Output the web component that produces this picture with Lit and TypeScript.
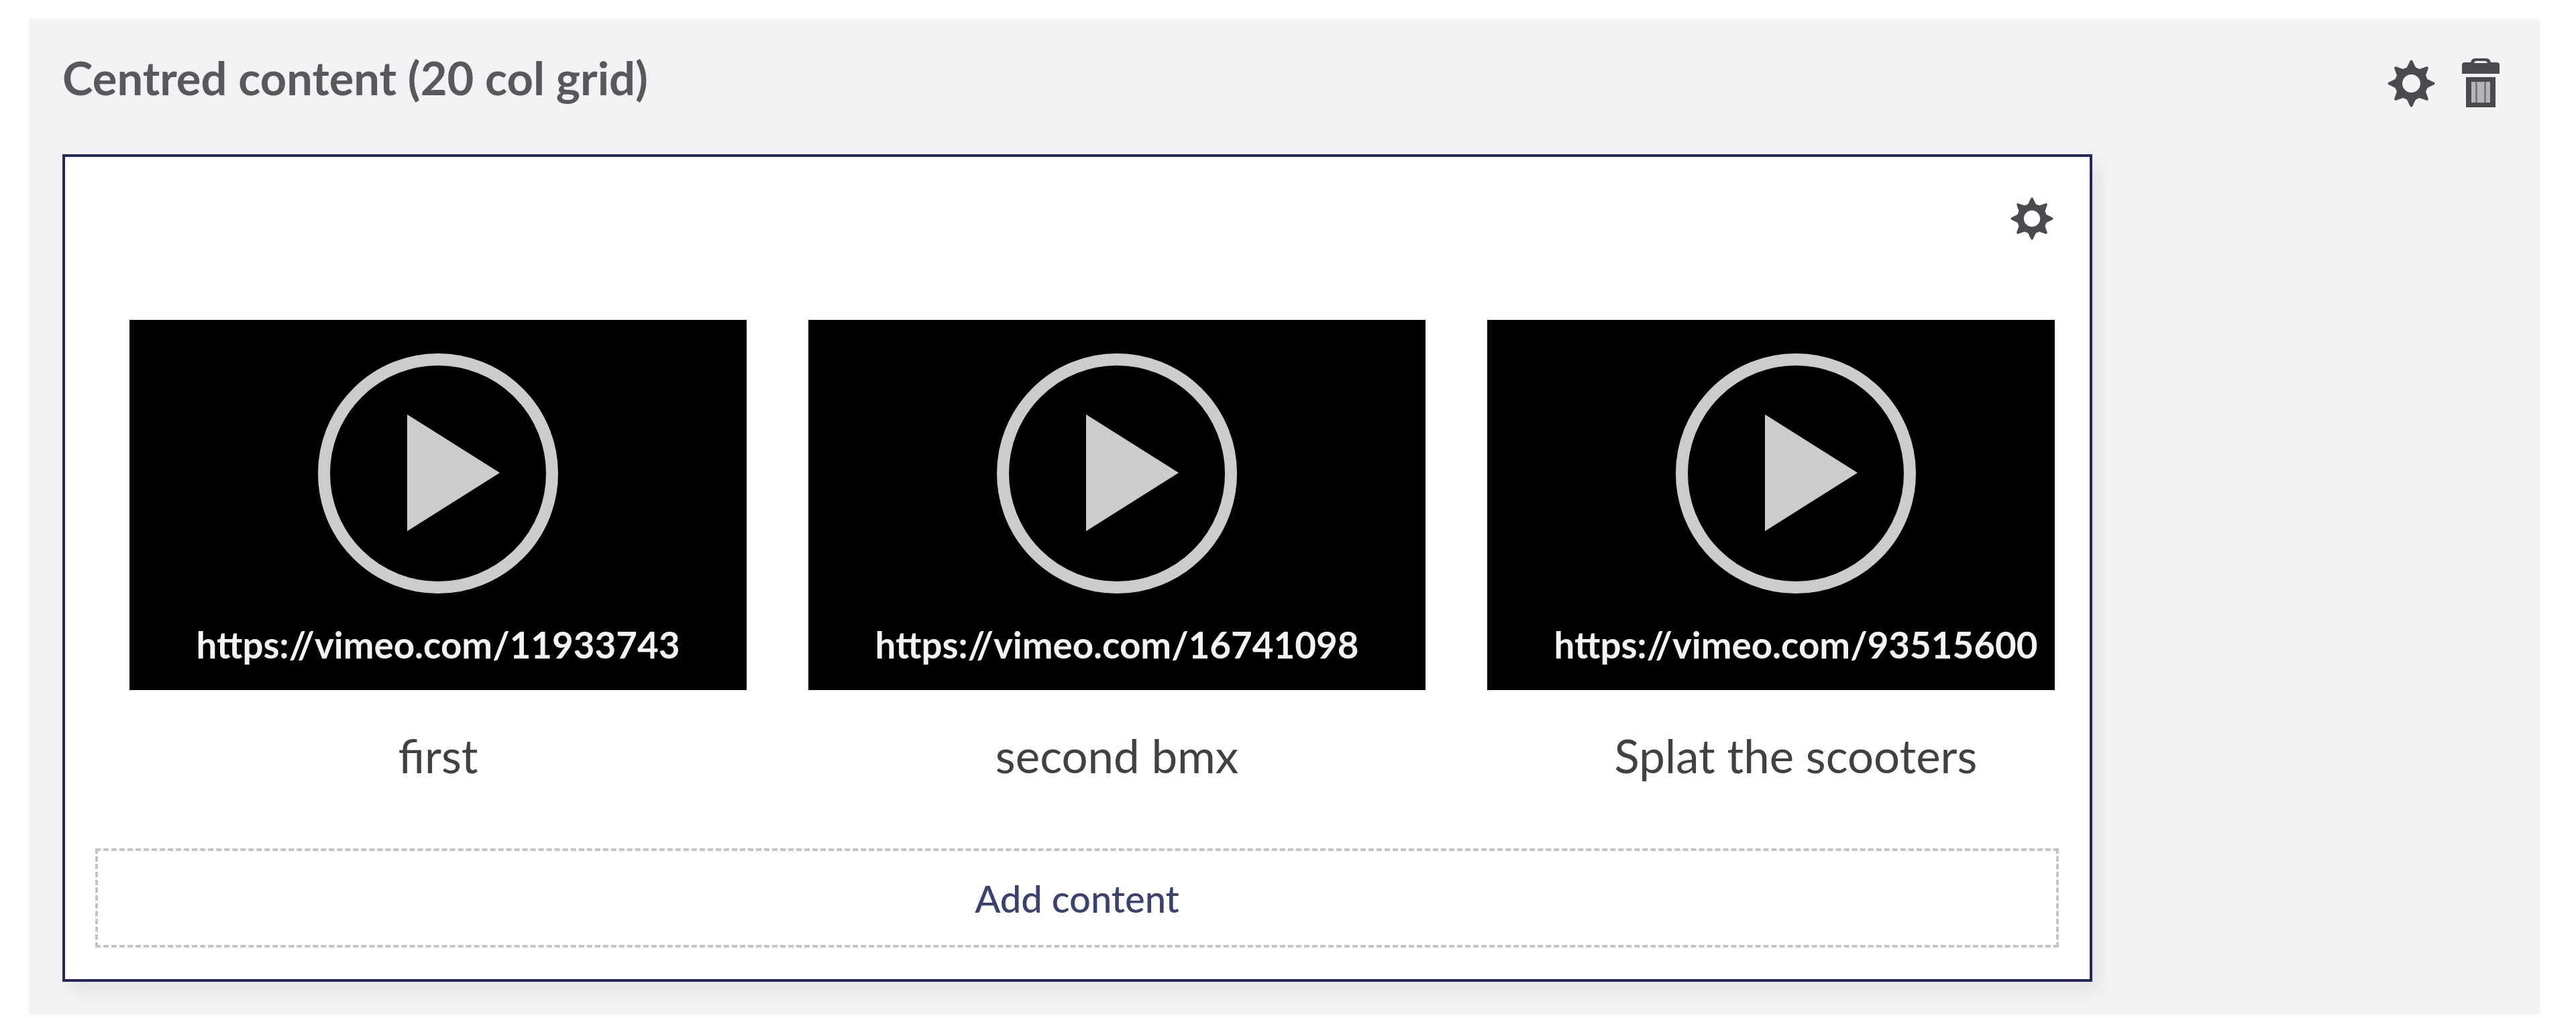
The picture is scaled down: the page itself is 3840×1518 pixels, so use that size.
import { LitElement, html, css, svg } from "lit";
import { customElement } from "lit/decorators.js";

function gearPath(): string {
  const c = 50, teeth = 8;
  const pts: string[] = [];
  for (let i = 0; i < teeth; i++) {
    const a = (i / teeth) * Math.PI * 2 - Math.PI / 2;
    const step = Math.PI * 2 / teeth;
    const p = (r: number, t: number) => `${(c + r * Math.cos(t)).toFixed(2)} ${(c + r * Math.sin(t)).toFixed(2)}`;
    pts.push(`${i === 0 ? "M" : "L"}${p(35, a - step * 0.34)}`);
    pts.push(`L${p(49, a - step * 0.05)}`);
    pts.push(`L${p(49, a + step * 0.05)}`);
    pts.push(`L${p(35, a + step * 0.34)}`);
  }
  return pts.join(" ") + " Z M50 31 A19 19 0 1 0 50 69 A19 19 0 1 0 50 31 Z";
}

const gear = (cls: string) => html`<svg class=${cls} viewBox="0 0 100 100" aria-hidden="true"><path fill-rule="evenodd" stroke-linejoin="round" d=${gearPath()}></path></svg>`;

const items = [
  { url: "https://vimeo.com/11933743", caption: "first" },
  { url: "https://vimeo.com/16741098", caption: "second bmx" },
  { url: "https://vimeo.com/93515600", caption: "Splat the scooters" },
];

@customElement("app-root")
export class AppRoot extends LitElement {
  static styles = css`
    :host { display: block; padding: 28px 53px 5px 43px; font-family: Lato, "Open Sans", sans-serif; background: #fff; }
    .panel { background: #f3f3f5; padding: 0 50px; height: 1485px; box-sizing: border-box; display: flex; flex-direction: column; }
    .head { height: 202px; flex: none; display: flex; justify-content: space-between; align-items: flex-start; }
    .title { margin: 48px 0 0; font-size: 68.7px; line-height: 80px; font-weight: 700; color: #58595c; }
    .tools { display: flex; align-items: flex-start; gap: 40px; margin: 59px 11px 0 0; }
    .gear-lg { width: 71px; height: 71px; margin-top: 2px; fill: #4a4b4f; }
    .trash { width: 56px; height: 75px; }
    .card { width: 3026px; height: 1234px; box-sizing: border-box; border: 4px solid #24285c; background: #fff; box-shadow: 12px 14px 24px rgba(60, 64, 80, 0.08); display: flex; flex-direction: column; }
    .card-head { height: 243px; flex: none; display: flex; justify-content: flex-end; padding: 60px 54px 0 0; box-sizing: border-box; }
    .gear-sm { width: 64px; height: 64px; fill: #4a4b4f; }
    .row { display: flex; gap: 92px; margin: 0 52px 0 96px; overflow: hidden; height: 788px; flex: none; }
    .item { flex: 0 0 920px; display: flex; flex-direction: column; align-items: center; }
    .thumb { width: 920px; height: 552px; background: #000; display: flex; flex-direction: column; align-items: center; flex: none; }
    .play { width: 358px; height: 358px; margin-top: 50px; flex: none; }
    .url { margin-top: 44px; font-size: 54.7px; line-height: 64px; font-weight: 700; color: #f4f4f4; white-space: nowrap; }
    .caption { margin-top: 60px; font-size: 69px; line-height: 76px; color: #404144; white-space: nowrap; }
    .add { margin: 0 46px 0 45px; height: 148px; flex: none; box-sizing: border-box; border: 4px dashed #c4c4c4; display: flex; align-items: center; justify-content: center; font-size: 56px; font-weight: 500; color: #3a4270; }
  `;

  render() {
    return html`
      <div class="panel">
        <div class="head">
          <h2 class="title">Centred content (20 col grid)</h2>
          <div class="tools">
            ${gear("gear-lg")}
            <svg class="trash" viewBox="0 0 56 75" aria-hidden="true">
              ${svg`<path fill="#4a4b4f" d="M13 6 Q14 0 20 0 H36 Q42 0 43 6 H52 Q56 6 56 10 V23 H0 V10 Q0 6 4 6 Z M18 7 H38 Q37 4 34 4 H22 Q19 4 18 7 Z"></path>
              <path fill="#4a4b4f" d="M6 28 H50 V73 H6 Z"></path>
              <path fill="#b4b5b8" d="M14 35 H42 V66 H14 Z"></path>
              <path fill="#7a7b7f" d="M20 35 H23 V66 H20 Z M33 35 H36 V66 H33 Z"></path>`}
            </svg>
          </div>
        </div>
        <div class="card">
          <div class="card-head">${gear("gear-sm")}</div>
          <div class="row">
            ${items.map((i) => html`
              <div class="item">
                <div class="thumb">
                  <svg class="play" viewBox="0 0 358 358" aria-hidden="true">
                    <circle cx="179" cy="179" r="170" fill="none" stroke="#ccc" stroke-width="18"></circle>
                    <path fill="#ccc" d="M133 91 L271 178 L133 265 Z"></path>
                  </svg>
                  <div class="url">${i.url}</div>
                </div>
                <div class="caption">${i.caption}</div>
              </div>`)}
          </div>
          <div class="add">Add content</div>
        </div>
      </div>
    `;
  }
}
